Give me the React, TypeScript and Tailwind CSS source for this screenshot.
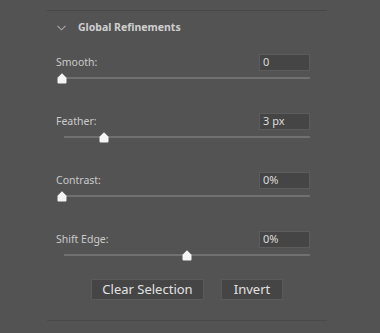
import React from "react"

const sliders = [
  { label: "Smooth:", value: "0", pos: 0 },
  { label: "Feather:", value: "3 px", pos: 42 },
  { label: "Contrast:", value: "0%", pos: 0 },
  { label: "Shift Edge:", value: "0%", pos: 125 },
]

function Thumb({ left }: { left: number }) {
  return (
    <svg
      className="absolute top-[-4px]"
      style={{ left: left - 5 }}
      width="10"
      height="11"
      viewBox="0 0 10 11"
    >
      <path d="M5 0.3 L9.5 4.8 L9.5 9.5 Q9.5 10.5 8.5 10.5 L1.5 10.5 Q0.5 10.5 0.5 9.5 L0.5 4.8 Z" fill="#f4f4f4" />
    </svg>
  )
}

export default function App() {
  return (
    <div className="w-[380px] h-[333px] bg-[#535353] pt-[10px] font-['Noto_Sans','Open_Sans',sans-serif]">
      <div className="mx-[47px] w-[280px] border-t border-[#474747]">
        {/* header */}
        <div className="h-[34px] flex items-center pl-[10px] gap-[12px]">
          <svg width="9" height="6" viewBox="0 0 9 6">
            <path d="M0.5 0.8 L4.5 4.8 L8.5 0.8" fill="none" stroke="#a8a8a8" strokeWidth="1.1" />
          </svg>
          <span className="text-[10.5px] font-bold text-[#cfcfcf]">Global Refinements</span>
        </div>

        <div className="mt-[9px] pl-[9px] pr-[17px] flex flex-col gap-[34px]">
          {sliders.map((s, i) => (
            <div key={i}>
              <div className="flex items-center justify-between h-[17px]">
                <span className="text-[10.5px] text-[#cacaca]">{s.label}</span>
                <div className="w-[51px] h-[17px] bg-[#454545] border border-[#5c5c5c] flex items-center pl-[3px] text-[11px] text-[#dcdcdc]">
                  {s.value}
                </div>
              </div>
              <div className="relative mt-[6px] ml-[8px] h-[2px] bg-[#707070]">
                <Thumb left={s.pos - 2} />
              </div>
            </div>
          ))}
        </div>

        <div className="mt-[23px] flex justify-center gap-[17px]">
          <button className="w-[113px] h-[21px] bg-[#454545] border border-[#5a5a5a] text-[13px] text-[#e2e2e2] leading-none">
            Clear Selection
          </button>
          <button className="w-[62px] h-[21px] bg-[#454545] border border-[#5a5a5a] text-[13px] text-[#e2e2e2] leading-none">
            Invert
          </button>
        </div>

        <div className="mt-[20px] border-t border-[#4a4a4a]" />
      </div>
    </div>
  )
}
